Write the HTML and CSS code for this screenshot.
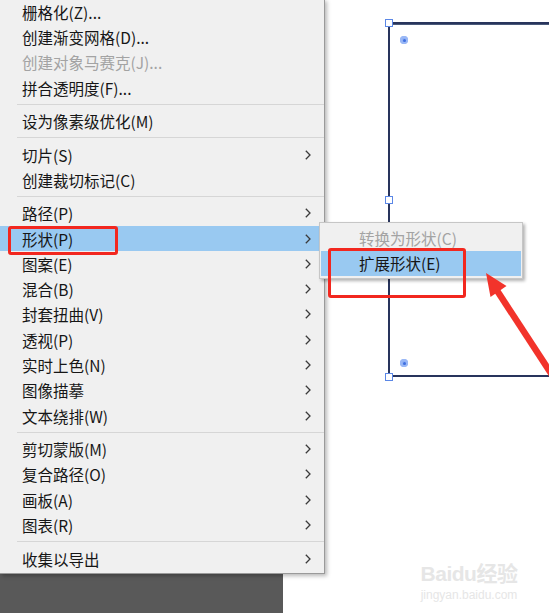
FILE: index.html
```html
<!DOCTYPE html>
<html lang="zh-CN">
<head>
<meta charset="utf-8">
<title>对象菜单</title>
<link rel="stylesheet" href="styles.css">
</head>
<body>
<div class="app">
  <div class="panel"></div>
  <div class="canvas">
    <div class="artboard">
      <span class="handle h-tl"></span>
      <span class="handle h-ml"></span>
      <span class="handle h-bl"></span>
      <span class="target t-top"></span>
      <span class="target t-bottom"></span>
    </div>
    <div class="watermark">
      <div class="wm-logo">Baidu经验</div>
      <div class="wm-url">jingyan.baidu.com</div>
    </div>
  </div>

  <div class="menu">
    <div class="item">栅格化(Z)...</div>
    <div class="item">创建渐变网格(D)...</div>
    <div class="item disabled">创建对象马赛克(J)...</div>
    <div class="item">拼合透明度(F)...</div>
    <div class="sep"></div>
    <div class="item">设为像素级优化(M)</div>
    <div class="sep"></div>
    <div class="item sub">切片(S)<svg class="chev" viewBox="0 0 6 10"><polyline points="0.8,0.8 5,5 0.8,9.2"/></svg></div>
    <div class="item">创建裁切标记(C)</div>
    <div class="sep"></div>
    <div class="item sub">路径(P)<svg class="chev" viewBox="0 0 6 10"><polyline points="0.8,0.8 5,5 0.8,9.2"/></svg></div>
    <div class="item sub active">形状(P)<svg class="chev" viewBox="0 0 6 10"><polyline points="0.8,0.8 5,5 0.8,9.2"/></svg></div>
    <div class="item sub">图案(E)<svg class="chev" viewBox="0 0 6 10"><polyline points="0.8,0.8 5,5 0.8,9.2"/></svg></div>
    <div class="item sub">混合(B)<svg class="chev" viewBox="0 0 6 10"><polyline points="0.8,0.8 5,5 0.8,9.2"/></svg></div>
    <div class="item sub">封套扭曲(V)<svg class="chev" viewBox="0 0 6 10"><polyline points="0.8,0.8 5,5 0.8,9.2"/></svg></div>
    <div class="item sub">透视(P)<svg class="chev" viewBox="0 0 6 10"><polyline points="0.8,0.8 5,5 0.8,9.2"/></svg></div>
    <div class="item sub">实时上色(N)<svg class="chev" viewBox="0 0 6 10"><polyline points="0.8,0.8 5,5 0.8,9.2"/></svg></div>
    <div class="item sub">图像描摹<svg class="chev" viewBox="0 0 6 10"><polyline points="0.8,0.8 5,5 0.8,9.2"/></svg></div>
    <div class="item sub">文本绕排(W)<svg class="chev" viewBox="0 0 6 10"><polyline points="0.8,0.8 5,5 0.8,9.2"/></svg></div>
    <div class="sep"></div>
    <div class="item sub">剪切蒙版(M)<svg class="chev" viewBox="0 0 6 10"><polyline points="0.8,0.8 5,5 0.8,9.2"/></svg></div>
    <div class="item sub">复合路径(O)<svg class="chev" viewBox="0 0 6 10"><polyline points="0.8,0.8 5,5 0.8,9.2"/></svg></div>
    <div class="item sub">画板(A)<svg class="chev" viewBox="0 0 6 10"><polyline points="0.8,0.8 5,5 0.8,9.2"/></svg></div>
    <div class="item sub">图表(R)<svg class="chev" viewBox="0 0 6 10"><polyline points="0.8,0.8 5,5 0.8,9.2"/></svg></div>
    <div class="sep"></div>
    <div class="item sub">收集以导出<svg class="chev" viewBox="0 0 6 10"><polyline points="0.8,0.8 5,5 0.8,9.2"/></svg></div>
  </div>

  <div class="submenu">
    <div class="sitem disabled">转换为形状(C)</div>
    <div class="sitem active">扩展形状(E)</div>
  </div>

  <div class="mark mark-main"></div>
  <div class="mark mark-sub"></div>

  <svg class="arrow" viewBox="0 0 549 613" width="549" height="613">
    <line x1="556" y1="381" x2="496" y2="289" />
    <polygon points="486,273 490.5,297 506.5,286" />
  </svg>
</div>
</body>
</html>
```

FILE: styles.css
```css
* { box-sizing: border-box; }

html, body {
  margin: 0;
  padding: 0;
  background: #ffffff;
  overflow: hidden;
}

.app {
  position: relative;
  width: 549px;
  height: 613px;
  display: flex;
  font-family: "Noto Sans CJK SC", "Noto Sans", sans-serif;
  overflow: hidden;
}

.panel {
  width: 283px;
  flex: none;
  background: #595959;
}

.canvas {
  position: relative;
  flex: 1;
  background: #ffffff;
}

/* artboard on the free canvas */
.artboard {
  position: absolute;
  left: 105px;
  top: 22px;
  width: 200px;
  height: 355px;
  border: 2px solid #28345c;
  border-right: none;
  box-shadow: inset 0 1px 0 #4a5a7a;
}

.handle {
  position: absolute;
  width: 8px;
  height: 8px;
  background: #ffffff;
  border: 1px solid #5b87e6;
}
.h-tl { left: -5px; top: -5px; }
.h-ml { left: -5px; top: 172px; }
.h-bl { left: -5px; top: 349px; }

.target {
  position: absolute;
  width: 8px;
  height: 8px;
  border-radius: 50%;
  background: #8fb0f5;
  box-shadow: inset 0 0 0 2px #9ab8f6;
}
.target::after {
  content: "";
  position: absolute;
  left: 2.5px;
  top: 2.5px;
  width: 3px;
  height: 3px;
  border-radius: 50%;
  background: #3f6fe0;
}
.t-top { left: 10px; top: 12px; }
.t-bottom { left: 10px; top: 335px; }

.watermark {
  position: absolute;
  left: 134px;
  top: 560px;
  width: 104px;
  text-align: center;
  white-space: nowrap;
  color: #e6e6e6;
  font-family: "Liberation Sans", "Noto Sans CJK SC", sans-serif;
}
.wm-logo {
  font-size: 21px;
  font-weight: bold;
  line-height: 28px;
  letter-spacing: -0.5px;
}
.wm-url {
  font-size: 12px;
  line-height: 14px;
}

/* main context menu */
.menu {
  position: absolute;
  left: 0;
  top: -1px;
  width: 325px;
  padding: 0 0 2px 0;
  background: #f0f0f0;
  border-right: 1px solid #9a9a9a;
  border-bottom: 1px solid #9a9a9a;
  box-shadow: 2px 2px 4px rgba(0, 0, 0, 0.28);
  display: flex;
  flex-direction: column;
}

.item {
  height: 25.3px;
  display: flex;
  align-items: center;
  justify-content: space-between;
  padding: 0 13px 0 22px;
  font-size: 15.5px;
  color: #161616;
  white-space: nowrap;
}
.item.disabled { color: #a3a3a3; }
.item.active { background: #99c9f1; }

.chev {
  width: 6px;
  height: 10px;
  fill: none;
  stroke: #3a3a3a;
  stroke-width: 1.3;
}

.sep {
  height: 8.2px;
  display: flex;
  align-items: center;
  padding-left: 17px;
}
.sep::before {
  content: "";
  display: block;
  width: 100%;
  height: 1px;
  background: #d6d6d6;
}

/* submenu */
.submenu {
  position: absolute;
  left: 319px;
  top: 222px;
  width: 204px;
  padding: 2px 1px 2px 1px;
  background: #f0f0f0;
  border: 1px solid #c6c6c6;
  box-shadow: 2px 2px 3px rgba(0, 0, 0, 0.3);
  display: flex;
  flex-direction: column;
}
.sitem {
  height: 25.5px;
  display: flex;
  align-items: center;
  padding-left: 38px;
  font-size: 15.5px;
  color: #161616;
  white-space: nowrap;
}
.sitem.disabled { color: #a3a3a3; }
.sitem.active { background: #99c9f1; }

/* annotation marks */
.mark {
  position: absolute;
  border: 3px solid #f2271f;
  border-radius: 3px;
}
.mark-main { left: 8px; top: 226px; width: 110px; height: 29px; }
.mark-sub { left: 328px; top: 248px; width: 138px; height: 50px; }

.arrow {
  position: absolute;
  left: 0;
  top: 0;
  pointer-events: none;
}
.arrow line {
  stroke: #f2332b;
  stroke-width: 6.5;
}
.arrow polygon {
  fill: #f2332b;
}
```
